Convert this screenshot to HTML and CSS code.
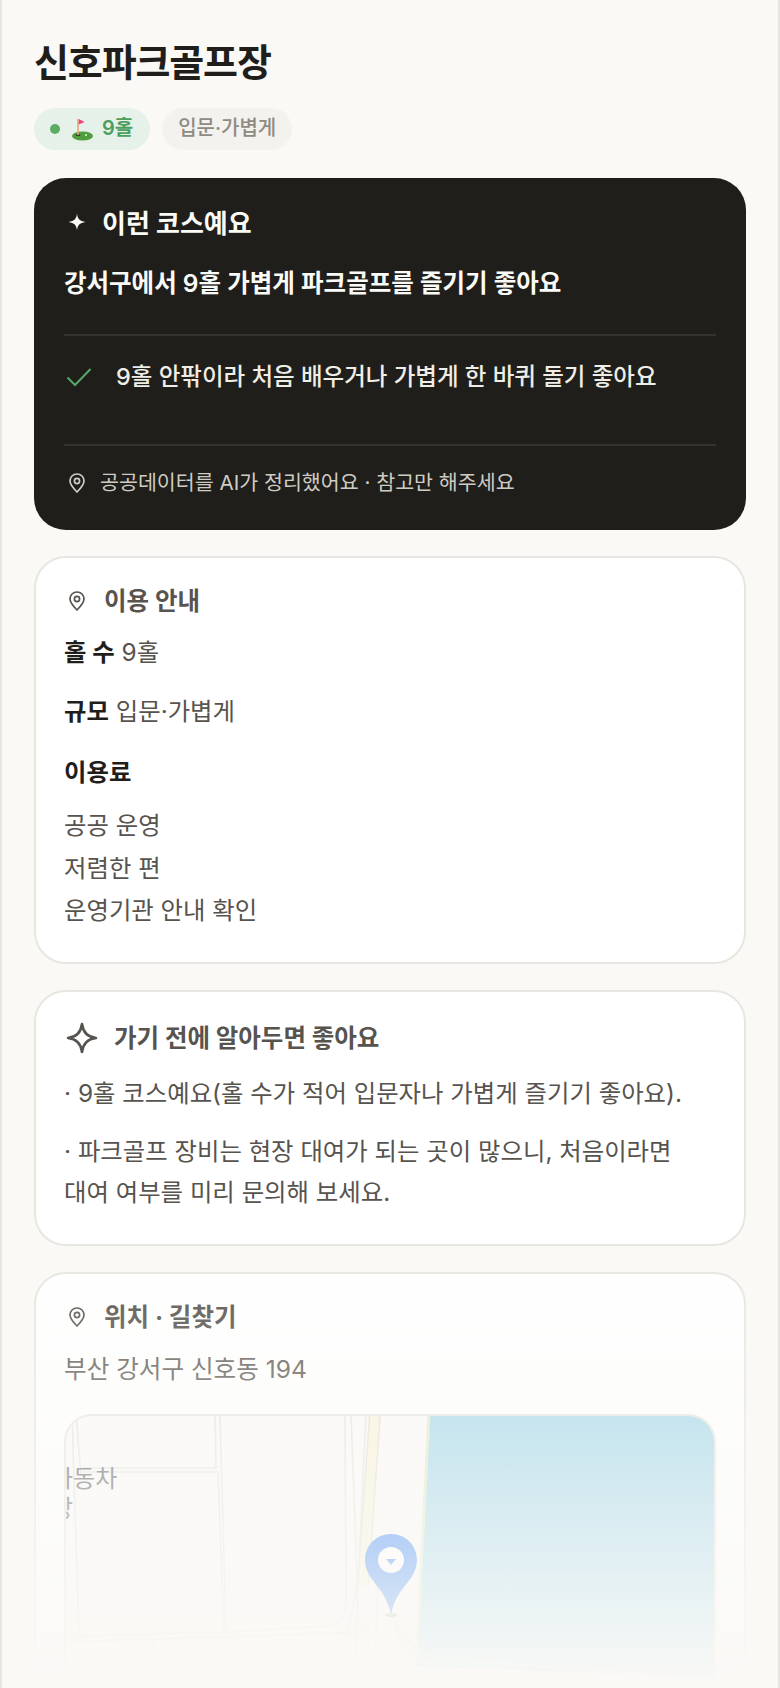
FILE: index.html
```html
<!DOCTYPE html>
<html lang="ko">
<head>
    <meta charset="UTF-8">
    <meta name="viewport" content="width=device-width, initial-scale=1.0">
    <title>신호파크골프장</title>
    <link rel="stylesheet" href="styles.css">
</head>
<body>
    <div class="page">
        <h1 class="title">신호파크골프장</h1>
        <div class="tags">
            <span class="tag tag-green">
                <i class="dot"></i>
                <svg class="golf" viewBox="0 0 24 24" width="24" height="24">
                    <ellipse cx="12.5" cy="19" rx="10.5" ry="4.5" fill="#4f9d3c"/>
                    <ellipse cx="8" cy="18" rx="2.5" ry="1" fill="#2d3a2a"/>
                    <circle cx="16" cy="18" r="1" fill="#e8efe0"/>
                    <rect x="7.2" y="2" width="1.6" height="16" fill="#e8a878"/>
                    <path d="M8.8 2 L14.5 5 L8.8 7.5 Z" fill="#f0407a"/>
                </svg>
                9홀
            </span>
            <span class="tag tag-gray">입문·가볍게</span>
        </div>

        <section class="dark-card">
            <h2 class="card-head head-light">
                <span class="head-icon">
                    <svg class="spark" viewBox="0 0 18 18" width="18" height="18"><path d="M9 0.5 C9.6 6 11.5 8 17.5 9 C11.5 10 9.6 12 9 17.5 C8.4 12 6.5 10 0.5 9 C6.5 8 8.4 6 9 0.5 Z" fill="#fafaf7"/></svg>
                </span>
                이런 코스예요
            </h2>
            <p class="summary">강서구에서 9홀 가볍게 파크골프를 즐기기 좋아요</p>
            <div class="check-row">
                <svg class="check" viewBox="0 0 26 20" width="26" height="20"><path d="M1.5 10.5 L9 18 L24.5 2" fill="none" stroke="#55a868" stroke-width="2"/></svg>
                <span>9홀 안팎이라 처음 배우거나 가볍게 한 바퀴 돌기 좋아요</span>
            </div>
            <div class="source">
                <span class="head-icon">
                    <svg viewBox="0 0 16 20" width="16" height="20"><path d="M8 1 C4 1 1 4 1 8 C1 12 5 16 8 19 C11 16 15 12 15 8 C15 4 12 1 8 1 Z" fill="none" stroke="currentColor" stroke-width="1.7"/><circle cx="8" cy="8" r="2.6" fill="none" stroke="currentColor" stroke-width="1.7"/></svg>
                </span>
                공공데이터를 AI가 정리했어요 · 참고만 해주세요
            </div>
        </section>

        <section class="card card-info">
            <h2 class="card-head">
                <span class="head-icon">
                    <svg viewBox="0 0 16 20" width="16" height="20"><path d="M8 1 C4 1 1 4 1 8 C1 12 5 16 8 19 C11 16 15 12 15 8 C15 4 12 1 8 1 Z" fill="none" stroke="currentColor" stroke-width="1.7"/><circle cx="8" cy="8" r="2.6" fill="none" stroke="currentColor" stroke-width="1.7"/></svg>
                </span>
                이용 안내
            </h2>
            <p class="info"><b>홀 수</b> 9홀</p>
            <p class="info"><b>규모</b> 입문·가볍게</p>
            <p class="info"><b>이용료</b></p>
            <ul class="fee">
                <li>공공 운영</li>
                <li>저렴한 편</li>
                <li>운영기관 안내 확인</li>
            </ul>
        </section>

        <section class="card card-tips">
            <h2 class="card-head">
                <span class="head-icon icon-wide">
                    <svg viewBox="0 0 32 32" width="32" height="32"><path d="M16 2 C17 10 21 15 30 16 C21 17 17 22 16 30 C15 22 11 17 2 16 C11 15 15 10 16 2 Z" fill="none" stroke="currentColor" stroke-width="2.6" stroke-linejoin="round"/></svg>
                </span>
                가기 전에 알아두면 좋아요
            </h2>
            <p class="tip">· 9홀 코스예요(홀 수가 적어 입문자나 가볍게 즐기기 좋아요).</p>
            <p class="tip">· 파크골프 장비는 현장 대여가 되는 곳이 많으니, 처음이라면<br>대여 여부를 미리 문의해 보세요.</p>
        </section>

        <section class="card card-map">
            <h2 class="card-head">
                <span class="head-icon">
                    <svg viewBox="0 0 16 20" width="16" height="20"><path d="M8 1 C4 1 1 4 1 8 C1 12 5 16 8 19 C11 16 15 12 15 8 C15 4 12 1 8 1 Z" fill="none" stroke="currentColor" stroke-width="1.7"/><circle cx="8" cy="8" r="2.6" fill="none" stroke="currentColor" stroke-width="1.7"/></svg>
                </span>
                위치 · 길찾기
            </h2>
            <p class="address">부산 강서구 신호동 194</p>
            <div class="map">
                <svg class="map-art" viewBox="0 0 652 300" width="652" height="300">
                    <path d="M363 -2 L350 250 L640 262 L656 262 L656 -2 Z" fill="#a6d8ea"/>
                    <path d="M363 -2 L350 250" fill="none" stroke="#dfeccb" stroke-width="3"/>
                    <g fill="none" stroke="#e4e4e1" stroke-width="1.6">
                        <path d="M6 -2 L13 220 M10 -2 L15 60"/>
                        <path d="M17 52 L150 52 L149 -2"/>
                        <path d="M16 56 L152 56 L158 216"/>
                        <path d="M154 -2 L160 216 L164 216"/>
                        <path d="M14 220 L158 216"/>
                        <path d="M164 216 L262 210 C274 208 280 200 280 184 L279 -2"/>
                        <path d="M0 226 L300 216 C312 214 284 210 292 190 L285 -2"/>
                        <path d="M0 220 L18 219 M0 280 L85 276 L84 224 M88 224 L90 280 L220 272 C260 262 285 230 290 170"/>
                        <path d="M300 -2 L292 170 L288 274"/>
                        <path d="M318 160 C322 210 340 240 390 244 L640 262"/>
                        <path d="M312 170 L308 270 M330 210 C340 250 370 254 420 258"/>
                    </g>
                    <path d="M309 -2 L297 170" fill="none" stroke="#e3e0cf" stroke-width="12"/>
                    <path d="M309 -2 L297 170" fill="none" stroke="#f8f4da" stroke-width="9"/>
                    <g transform="translate(-2 -2)">
                        <ellipse cx="327" cy="201" rx="6" ry="2" fill="#b4b4b0"/>
                        <path d="M327 200 C322 180 314 174 307 164 C303 158 301 152 301 146 C301 132 312 120 327 120 C342 120 353 132 353 146 C353 152 351 158 347 164 C340 174 332 180 327 200 Z" fill="#3182f6"/>
                        <circle cx="327" cy="146" r="13" fill="#fff"/>
                        <path d="M322 145 L332 145 L327 151 Z" fill="#3182f6"/>
                    </g>
                </svg>
                <span class="map-label">자동차<br>장</span>
            </div>
        </section>

        <div class="fade"></div>
    </div>
</body>
</html>
```

FILE: styles.css
```css
* {
    box-sizing: border-box;
}
body {
    margin: 0;
    font-family: Inter, "Noto Sans CJK KR", sans-serif;
    background-color: #faf9f6;
}
.page {
    position: relative;
    width: 780px;
    height: 1688px;
    overflow: hidden;
    padding: 0 32px;
    background-color: #faf9f6;
    border-left: 2px solid #e8e6e0;
    border-right: 2px solid #e8e6e0;
}
.title {
    margin: 0;
    padding-top: 37px;
    font-size: 38px;
    line-height: 50px;
    font-weight: 700;
    letter-spacing: -1.14px;
    color: #1f1e1a;
}
.tags {
    display: flex;
    gap: 12px;
    margin-top: 21px;
}
.tag {
    display: flex;
    align-items: center;
    height: 42px;
    padding: 0 16px 5px;
    border-radius: 21px;
    font-size: 20px;
    font-weight: 500;
}
.tag-green {
    gap: 10px;
    padding-right: 17px;
    background-color: #e6f1ea;
    color: #4d9f5e;
    font-weight: 600;
}
.tag-gray {
    background-color: #f3f2ee;
    color: #8f8b82;
}
.dot {
    width: 10px;
    height: 10px;
    margin-top: 5px;
    border-radius: 50%;
    background-color: #5aad62;
}
.golf {
    margin: 5px -2px 0 0;
}
.dark-card {
    margin-top: 28px;
    padding: 28px 30px 0;
    height: 352px;
    border-radius: 32px;
    background-color: #1f1e1a;
    color: #fafaf7;
}
.card {
    margin-top: 26px;
    padding: 25px 28px 30px;
    background-color: #fff;
    border: 2px solid #e8e6e0;
    border-radius: 32px;
}
.card-head {
    display: flex;
    align-items: center;
    gap: 14px;
    margin: 0;
    font-size: 24.5px;
    line-height: 36px;
    font-weight: 700;
    color: #57534e;
}
.head-light {
    gap: 12px;
    font-size: 26px;
    color: #fafaf7;
}
.head-icon {
    display: flex;
    justify-content: center;
    align-items: center;
    width: 26px;
    flex-shrink: 0;
}
.icon-wide {
    width: 36px;
}
.spark {
    margin-top: -4px;
}
.summary {
    margin: 23px 0 0;
    font-size: 24.5px;
    line-height: 36px;
    font-weight: 600;
    padding-bottom: 33px;
    border-bottom: 2px solid #33322e;
}
.check-row {
    display: flex;
    align-items: center;
    gap: 24px;
    padding: 23px 0 49px;
    font-size: 23.5px;
    line-height: 36px;
    font-weight: 500;
    color: #efede6;
    border-bottom: 2px solid #33322e;
}
.check {
    margin-left: 2px;
    flex-shrink: 0;
}
.source {
    display: flex;
    align-items: center;
    gap: 10px;
    margin-top: 21px;
    font-size: 20.6px;
    line-height: 32px;
    color: #cfccc4;
}
.info {
    margin: 0;
    font-size: 24.4px;
    line-height: 36px;
    color: #57534e;
}
.card-info .info {
    margin-top: 23px;
}
.card-info .card-head + .info {
    margin-top: 15px;
}
.card-info .info:last-of-type {
    margin-top: 25px;
}
.info b {
    font-weight: 700;
    color: #1f1e1a;
}
.fee {
    list-style: none;
    margin: 14px 0 0;
    padding: 0;
    font-size: 24.4px;
    line-height: 42.5px;
    color: #57534e;
}
.card-tips {
    padding-top: 28px;
    padding-bottom: 31px;
}
.tip {
    margin: 17px 0 0;
    font-size: 24.4px;
    line-height: 41px;
    color: #57534e;
}
.tip + .tip {
    margin-top: 17px;
}
.card-map {
    padding-bottom: 0;
    height: 700px;
}
.address {
    margin: 16px 0 0;
    font-size: 24.6px;
    line-height: 36px;
    color: #5f5b55;
}
.map {
    position: relative;
    margin-top: 27px;
    height: 420px;
    overflow: hidden;
    background-color: #fbfaf8;
    border: 2px solid #e8e6e0;
    border-radius: 28px;
}
.map-art {
    display: block;
}
.map-label {
    position: absolute;
    left: -15px;
    top: 48px;
    font-size: 24px;
    line-height: 30px;
    color: #5f6669;
}
.fade {
    position: absolute;
    left: -2px;
    right: -2px;
    top: 1250px;
    bottom: 0;
    background: linear-gradient(to bottom, rgba(250, 249, 246, 0), #faf9f6);
}
```
